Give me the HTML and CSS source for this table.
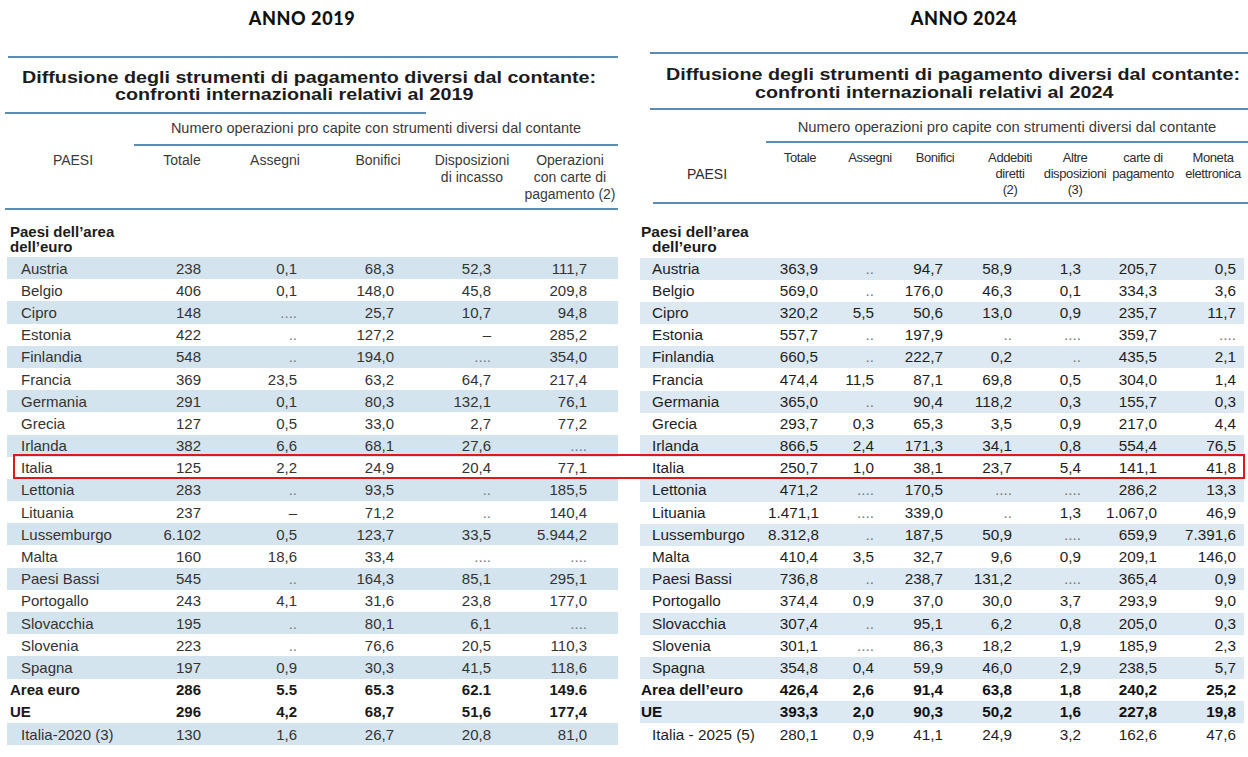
FILE: index.html
```html
<!DOCTYPE html>
<html lang="it">
<head>
<meta charset="utf-8">
<title>Diffusione degli strumenti di pagamento</title>
<link rel="stylesheet" href="styles.css">
</head>
<body>
<div class="page">
  <section class="panel p19">
    <h2 class="anno">ANNO 2019</h2>
    <div class="rule top"></div>
    <h1 class="title"><span class="l1">Diffusione degli strumenti di pagamento diversi dal contante:</span><span class="l2">confronti internazionali relativi al 2019</span></h1>
    <div class="rule sub"></div>
    <div class="super">Numero operazioni pro capite con strumenti diversi dal contante</div>
    <div class="rule mid"></div>
    <div class="heads">
      <div class="h"><span>PAESI</span></div>
      <div class="h"><span>Totale</span></div>
      <div class="h"><span>Assegni</span></div>
      <div class="h"><span>Bonifici</span></div>
      <div class="h"><span>Disposizioni<br>di incasso</span></div>
      <div class="h"><span>Operazioni<br>con carte di<br>pagamento (2)</span></div>
    </div>
    <div class="rule bottom"></div>
    <div class="group">Paesi dell’area<br>dell’euro</div>
    <div class="rows">
      <div class="row band"><span class="name">Austria</span><span>238</span><span>0,1</span><span>68,3</span><span>52,3</span><span>111,7</span></div>
      <div class="row"><span class="name">Belgio</span><span>406</span><span>0,1</span><span>148,0</span><span>45,8</span><span>209,8</span></div>
      <div class="row band"><span class="name">Cipro</span><span>148</span><span class="na">....</span><span>25,7</span><span>10,7</span><span>94,8</span></div>
      <div class="row"><span class="name">Estonia</span><span>422</span><span class="na">..</span><span>127,2</span><span>–</span><span>285,2</span></div>
      <div class="row band"><span class="name">Finlandia</span><span>548</span><span class="na">..</span><span>194,0</span><span class="na">....</span><span>354,0</span></div>
      <div class="row"><span class="name">Francia</span><span>369</span><span>23,5</span><span>63,2</span><span>64,7</span><span>217,4</span></div>
      <div class="row band"><span class="name">Germania</span><span>291</span><span>0,1</span><span>80,3</span><span>132,1</span><span>76,1</span></div>
      <div class="row"><span class="name">Grecia</span><span>127</span><span>0,5</span><span>33,0</span><span>2,7</span><span>77,2</span></div>
      <div class="row band"><span class="name">Irlanda</span><span>382</span><span>6,6</span><span>68,1</span><span>27,6</span><span class="na">....</span></div>
      <div class="row"><span class="name">Italia</span><span>125</span><span>2,2</span><span>24,9</span><span>20,4</span><span>77,1</span></div>
      <div class="row band"><span class="name">Lettonia</span><span>283</span><span class="na">..</span><span>93,5</span><span class="na">..</span><span>185,5</span></div>
      <div class="row"><span class="name">Lituania</span><span>237</span><span>–</span><span>71,2</span><span class="na">..</span><span>140,4</span></div>
      <div class="row band"><span class="name">Lussemburgo</span><span>6.102</span><span>0,5</span><span>123,7</span><span>33,5</span><span>5.944,2</span></div>
      <div class="row"><span class="name">Malta</span><span>160</span><span>18,6</span><span>33,4</span><span class="na">....</span><span class="na">....</span></div>
      <div class="row band"><span class="name">Paesi Bassi</span><span>545</span><span class="na">..</span><span>164,3</span><span>85,1</span><span>295,1</span></div>
      <div class="row"><span class="name">Portogallo</span><span>243</span><span>4,1</span><span>31,6</span><span>23,8</span><span>177,0</span></div>
      <div class="row band"><span class="name">Slovacchia</span><span>195</span><span class="na">..</span><span>80,1</span><span>6,1</span><span class="na">....</span></div>
      <div class="row"><span class="name">Slovenia</span><span>223</span><span class="na">..</span><span>76,6</span><span>20,5</span><span>110,3</span></div>
      <div class="row band"><span class="name">Spagna</span><span>197</span><span>0,9</span><span>30,3</span><span>41,5</span><span>118,6</span></div>
      <div class="row total"><span class="name">Area euro</span><span>286</span><span>5.5</span><span>65.3</span><span>62.1</span><span>149.6</span></div>
      <div class="row total"><span class="name">UE</span><span>296</span><span>4,2</span><span>68,7</span><span>51,6</span><span>177,4</span></div>
      <div class="row band"><span class="name">Italia-2020 (3)</span><span>130</span><span>1,6</span><span>26,7</span><span>20,8</span><span>81,0</span></div>
    </div>
  </section>

  <section class="panel p24">
    <h2 class="anno">ANNO 2024</h2>
    <div class="rule top"></div>
    <h1 class="title"><span class="l1">Diffusione degli strumenti di pagamento diversi dal contante:</span><span class="l2">confronti internazionali relativi al 2024</span></h1>
    <div class="rule sub"></div>
    <div class="super">Numero operazioni pro capite con strumenti diversi dal contante</div>
    <div class="rule mid"></div>
    <div class="heads">
      <div class="h paesi"><span>PAESI</span></div>
      <div class="h"><span>Totale</span></div>
      <div class="h"><span>Assegni</span></div>
      <div class="h"><span>Bonifici</span></div>
      <div class="h"><span>Addebiti<br>diretti<br>(2)</span></div>
      <div class="h"><span>Altre<br>disposizioni<br>(3)</span></div>
      <div class="h"><span>carte di<br>pagamento</span></div>
      <div class="h"><span>Moneta<br>elettronica</span></div>
    </div>
    <div class="rule bottom"></div>
    <div class="group"><span>Paesi dell’area</span><span class="indent">dell’euro</span></div>
    <div class="rows">
      <div class="row band"><span class="name">Austria</span><span>363,9</span><span class="na">..</span><span>94,7</span><span>58,9</span><span>1,3</span><span>205,7</span><span>0,5</span></div>
      <div class="row"><span class="name">Belgio</span><span>569,0</span><span class="na">..</span><span>176,0</span><span>46,3</span><span>0,1</span><span>334,3</span><span>3,6</span></div>
      <div class="row band"><span class="name">Cipro</span><span>320,2</span><span>5,5</span><span>50,6</span><span>13,0</span><span>0,9</span><span>235,7</span><span>11,7</span></div>
      <div class="row"><span class="name">Estonia</span><span>557,7</span><span class="na">..</span><span>197,9</span><span class="na">..</span><span class="na">....</span><span>359,7</span><span class="na">....</span></div>
      <div class="row band"><span class="name">Finlandia</span><span>660,5</span><span class="na">..</span><span>222,7</span><span>0,2</span><span class="na">..</span><span>435,5</span><span>2,1</span></div>
      <div class="row"><span class="name">Francia</span><span>474,4</span><span>11,5</span><span>87,1</span><span>69,8</span><span>0,5</span><span>304,0</span><span>1,4</span></div>
      <div class="row band"><span class="name">Germania</span><span>365,0</span><span class="na">..</span><span>90,4</span><span>118,2</span><span>0,3</span><span>155,7</span><span>0,3</span></div>
      <div class="row"><span class="name">Grecia</span><span>293,7</span><span>0,3</span><span>65,3</span><span>3,5</span><span>0,9</span><span>217,0</span><span>4,4</span></div>
      <div class="row band"><span class="name">Irlanda</span><span>866,5</span><span>2,4</span><span>171,3</span><span>34,1</span><span>0,8</span><span>554,4</span><span>76,5</span></div>
      <div class="row"><span class="name">Italia</span><span>250,7</span><span>1,0</span><span>38,1</span><span>23,7</span><span>5,4</span><span>141,1</span><span>41,8</span></div>
      <div class="row band"><span class="name">Lettonia</span><span>471,2</span><span class="na">....</span><span>170,5</span><span class="na">....</span><span class="na">....</span><span>286,2</span><span>13,3</span></div>
      <div class="row"><span class="name">Lituania</span><span>1.471,1</span><span class="na">....</span><span>339,0</span><span class="na">..</span><span>1,3</span><span>1.067,0</span><span>46,9</span></div>
      <div class="row band"><span class="name">Lussemburgo</span><span>8.312,8</span><span class="na">..</span><span>187,5</span><span>50,9</span><span class="na">....</span><span>659,9</span><span>7.391,6</span></div>
      <div class="row"><span class="name">Malta</span><span>410,4</span><span>3,5</span><span>32,7</span><span>9,6</span><span>0,9</span><span>209,1</span><span>146,0</span></div>
      <div class="row band"><span class="name">Paesi Bassi</span><span>736,8</span><span class="na">..</span><span>238,7</span><span>131,2</span><span class="na">....</span><span>365,4</span><span>0,9</span></div>
      <div class="row"><span class="name">Portogallo</span><span>374,4</span><span>0,9</span><span>37,0</span><span>30,0</span><span>3,7</span><span>293,9</span><span>9,0</span></div>
      <div class="row band"><span class="name">Slovacchia</span><span>307,4</span><span class="na">..</span><span>95,1</span><span>6,2</span><span>0,8</span><span>205,0</span><span>0,3</span></div>
      <div class="row"><span class="name">Slovenia</span><span>301,1</span><span class="na">....</span><span>86,3</span><span>18,2</span><span>1,9</span><span>185,9</span><span>2,3</span></div>
      <div class="row band"><span class="name">Spagna</span><span>354,8</span><span>0,4</span><span>59,9</span><span>46,0</span><span>2,9</span><span>238,5</span><span>5,7</span></div>
      <div class="row total"><span class="name">Area dell’euro</span><span>426,4</span><span>2,6</span><span>91,4</span><span>63,8</span><span>1,8</span><span>240,2</span><span>25,2</span></div>
      <div class="row total band"><span class="name">UE</span><span>393,3</span><span>2,0</span><span>90,3</span><span>50,2</span><span>1,6</span><span>227,8</span><span>19,8</span></div>
      <div class="row"><span class="name">Italia - 2025 (5)</span><span>280,1</span><span>0,9</span><span>41,1</span><span>24,9</span><span>3,2</span><span>162,6</span><span>47,6</span></div>
    </div>
  </section>

  <div class="highlight"></div>
</div>
</body>
</html>
```

FILE: styles.css
```css
html, body {
  margin: 0;
  padding: 0;
  background: #ffffff;
}

body {
  font-family: "Liberation Sans", Arial, Helvetica, sans-serif;
  color: #2a2a2a;
}

.page {
  position: relative;
  display: flex;
  gap: 16px;
  width: 1248px;
  height: 757px;
  overflow: hidden;
}

.panel {
  display: flex;
  flex-direction: column;
  flex: none;
}

.p19 { width: 620px; }
.p24 { width: 612px; }

/* year heading */
.anno {
  margin: 0;
  height: 36px;
  line-height: 36px;
  text-align: center;
  font-family: Lato, "Open Sans", sans-serif;
  font-weight: 900;
  font-size: 18px;
  letter-spacing: 0.6px;
  color: #111;
}
.p19 .anno { padding-right: 16px; }
.p24 .anno { padding-left: 44px; }

/* rules */
.rule {
  height: 2px;
  background: #5b8db4;
  flex: none;
}

.p19 .rule.top { margin: 20px 2px 0 8px; }
.p19 .rule.sub { margin: 9.5px 0 0 5px; width: 421px; }
.p19 .rule.mid { margin: 7.5px 0 0 134px; width: 484px; }
.p19 .rule.bottom { margin: 5.5px 0 0 5px; width: 613px; }

.p24 .rule.top { margin: 16px 0 0 14px; }
.p24 .rule.sub { margin: 6px 0 0 14px; }
.p24 .rule.mid { margin: 5.5px 0 0 130px; }
.p24 .rule.bottom { margin: 4px 0 0 17px; }

/* title: the source scan is horizontally stretched */
.title {
  margin: 0;
  font-weight: 700;
  color: #1c1c1c;
  white-space: nowrap;
  font-size: 17px;
}
.title span {
  display: block;
  transform: scaleX(1.16);
  transform-origin: 0 50%;
}

.p19 .title {
  margin-top: 10.5px;
  line-height: 17px;
  padding-left: 22px;
}
.p19 .title .l2 { margin-left: 93px; }

.p24 .title {
  margin-top: 12px;
  line-height: 18px;
  padding-left: 30px;
}
.p24 .title .l2 { margin-left: 89px; }

/* super header */
.super {
  text-align: center;
  white-space: nowrap;
  color: #3a3a3a;
}
.p19 .super {
  margin: 5.5px 0 0 134px;
  width: 484px;
  font-size: 14.5px;
  line-height: 17px;
}
.p24 .super {
  margin: 8.5px 0 0 130px;
  width: 482px;
  font-size: 14.8px;
  line-height: 17px;
}

/* column headers */
.heads {
  display: grid;
  color: #3a3a3a;
}
.h {
  display: flex;
  justify-content: center;
  align-items: flex-start;
  min-width: 0;
}
.h span {
  white-space: nowrap;
  text-align: center;
}

.p19 .heads {
  margin: 5.5px 0 0 5px;
  grid-template-columns: 136px 82px 104px 102px 86px 110px;
  height: 51px;
  font-size: 14px;
  line-height: 17px;
}

.p24 .heads {
  margin: 7px 0 0 4px;
  grid-template-columns: 134px 52px 88px 42px 108px 22px 114px 26px;
  height: 48px;
  font-size: 13px;
  line-height: 16px;
  letter-spacing: -0.4px;
  color: #2e2e2e;
}
.p24 .h.paesi {
  align-items: center;
  font-size: 14px;
  letter-spacing: 0;
}

/* group label */
.group {
  font-weight: 700;
  color: #1c1c1c;
  line-height: 15px;
}
.p19 .group {
  margin: 13.5px 0 0 10px;
  font-size: 15px;
}
.p24 .group {
  margin: 19.5px 0 0 5px;
  font-size: 15.5px;
  display: flex;
  flex-direction: column;
}
.p24 .group .indent { padding-left: 11px; }

/* data rows */
.rows {
  display: flex;
  flex-direction: column;
}
.row {
  display: grid;
  height: 22.2px;
  align-items: center;
  font-size: 15px;
  white-space: nowrap;
}
.row span { text-align: right; }
.row .name { text-align: left; }

.p19 .rows { margin: 3.5px 0 0 7px; width: 611px; }
.p19 .row {
  grid-template-columns: 133px 61px 96px 97px 97px 96px 31px;
  color: #333;
}
.p19 .row .name { padding-left: 14px; }
.p19 .row.band { background: #d4e4ee; }
.p19 .row.total { font-weight: 700; color: #1a1a1a; }
.p19 .row.total .name { padding-left: 3px; }

.p24 .rows { margin: 4px 0 0 4px; width: 604px; }
.p24 .row {
  grid-template-columns: 128px 50px 56px 69px 69px 69px 76px 79px 8px;
  color: #1e1e1e;
  font-size: 15.3px;
}
.p24 .row .name { padding-left: 12px; }
.p24 .row.band { background: #dde9f2; }
.p24 .row.total { font-weight: 700; color: #111; }
.p24 .row.total .name { padding-left: 1px; }

.row .na { color: #7a7a7a; }

/* Italia highlight box */
.highlight {
  position: absolute;
  left: 13px;
  top: 454px;
  width: 1228px;
  height: 21px;
  border: 2px solid #e3161e;
  pointer-events: none;
}
```
